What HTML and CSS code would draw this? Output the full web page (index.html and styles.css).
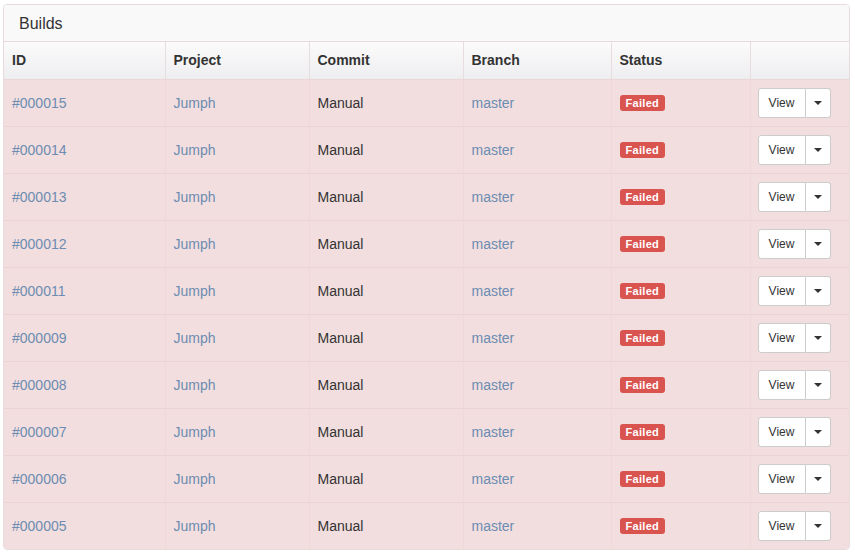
FILE: index.html
```html
<!DOCTYPE html>
<html>
<head>
<meta charset="utf-8">
<link rel="stylesheet" href="styles.css">
</head>
<body>
<div class="panel">
  <div class="panel-heading">Builds</div>
  <table class="builds">
    <colgroup>
      <col class="c-id"><col class="c-project"><col class="c-commit"><col class="c-branch"><col class="c-status"><col class="c-act">
    </colgroup>
    <thead>
      <tr><th>ID</th><th>Project</th><th>Commit</th><th>Branch</th><th>Status</th><th></th></tr>
    </thead>
    <tbody>
      <tr><td><a>#000015</a></td><td><a>Jumph</a></td><td>Manual</td><td><a>master</a></td><td><span class="label">Failed</span></td><td class="act"><span class="btn-group"><span class="btn">View</span><span class="btn caret-btn"><span class="caret"></span></span></span></td></tr>
      <tr><td><a>#000014</a></td><td><a>Jumph</a></td><td>Manual</td><td><a>master</a></td><td><span class="label">Failed</span></td><td class="act"><span class="btn-group"><span class="btn">View</span><span class="btn caret-btn"><span class="caret"></span></span></span></td></tr>
      <tr><td><a>#000013</a></td><td><a>Jumph</a></td><td>Manual</td><td><a>master</a></td><td><span class="label">Failed</span></td><td class="act"><span class="btn-group"><span class="btn">View</span><span class="btn caret-btn"><span class="caret"></span></span></span></td></tr>
      <tr><td><a>#000012</a></td><td><a>Jumph</a></td><td>Manual</td><td><a>master</a></td><td><span class="label">Failed</span></td><td class="act"><span class="btn-group"><span class="btn">View</span><span class="btn caret-btn"><span class="caret"></span></span></span></td></tr>
      <tr><td><a>#000011</a></td><td><a>Jumph</a></td><td>Manual</td><td><a>master</a></td><td><span class="label">Failed</span></td><td class="act"><span class="btn-group"><span class="btn">View</span><span class="btn caret-btn"><span class="caret"></span></span></span></td></tr>
      <tr><td><a>#000009</a></td><td><a>Jumph</a></td><td>Manual</td><td><a>master</a></td><td><span class="label">Failed</span></td><td class="act"><span class="btn-group"><span class="btn">View</span><span class="btn caret-btn"><span class="caret"></span></span></span></td></tr>
      <tr><td><a>#000008</a></td><td><a>Jumph</a></td><td>Manual</td><td><a>master</a></td><td><span class="label">Failed</span></td><td class="act"><span class="btn-group"><span class="btn">View</span><span class="btn caret-btn"><span class="caret"></span></span></span></td></tr>
      <tr><td><a>#000007</a></td><td><a>Jumph</a></td><td>Manual</td><td><a>master</a></td><td><span class="label">Failed</span></td><td class="act"><span class="btn-group"><span class="btn">View</span><span class="btn caret-btn"><span class="caret"></span></span></span></td></tr>
      <tr><td><a>#000006</a></td><td><a>Jumph</a></td><td>Manual</td><td><a>master</a></td><td><span class="label">Failed</span></td><td class="act"><span class="btn-group"><span class="btn">View</span><span class="btn caret-btn"><span class="caret"></span></span></span></td></tr>
      <tr><td><a>#000005</a></td><td><a>Jumph</a></td><td>Manual</td><td><a>master</a></td><td><span class="label">Failed</span></td><td class="act"><span class="btn-group"><span class="btn">View</span><span class="btn caret-btn"><span class="caret"></span></span></span></td></tr>
    </tbody>
  </table>
</div>
</body>
</html>
```
FILE: styles.css
```css
html, body {
  margin: 0;
  padding: 0;
  background: #ffffff;
}
body {
  font-family: "Liberation Sans", Arial, sans-serif;
  font-size: 14px;
  color: #333333;
}
.panel {
  margin: 4px 5px 6px 3px;
  border: 1px solid #e6dcdc;
  border-radius: 4px;
  background: #ffffff;
  overflow: hidden;
}
.panel-heading {
  height: 37px;
  box-sizing: border-box;
  padding: 1px 15px 0;
  line-height: 35px;
  font-size: 16px;
  color: #333333;
  background: #f9f9f9;
  border-bottom: 1px solid #ead9da;
}
.builds {
  width: 100%;
  border-collapse: collapse;
  table-layout: fixed;
}
.c-id { width: 161px; }
.c-project { width: 144px; }
.c-commit { width: 154px; }
.c-branch { width: 148px; }
.c-status { width: 139px; }
.builds th {
  text-align: left;
  font-weight: bold;
  height: 37px;
  box-sizing: border-box;
  padding: 0 8px;
  line-height: 20px;
  background: linear-gradient(#fbfbfb, #eeedf0);
  border-left: 1px solid #e6dede;
  border-bottom: 1px solid #ead6d6;
}
.builds th:first-child { border-left: none; }
.builds td {
  height: 47px;
  box-sizing: border-box;
  padding: 0 8px;
  background: #f2dede;
  border-top: 1px solid #ebd3d3;
  border-left: 1px solid #efd8d8;
  vertical-align: middle;
}
.builds td:first-child { border-left: none; }
.builds tbody tr:first-child td { border-top: none; }
.builds td.act { padding-left: 7px; }
.builds a {
  color: #6c8cb2;
  text-decoration: none;
}
.label {
  display: inline-block;
  background: #d9534f;
  color: #ffffff;
  font-size: 11px;
  font-weight: bold;
  line-height: 16px;
  padding: 0 6px;
  border-radius: 3px;
  vertical-align: middle;
  letter-spacing: 0.3px;
}
.btn-group {
  display: inline-flex;
  vertical-align: middle;
}
.btn {
  display: inline-flex;
  align-items: center;
  justify-content: center;
  height: 30px;
  box-sizing: border-box;
  width: 48px;
  font-size: 12px;
  color: #333333;
  background: #ffffff;
  border: 1px solid #cccccc;
  border-radius: 3px 0 0 3px;
}
.caret-btn {
  width: 25px;
  border-left: none;
  border-radius: 0 3px 3px 0;
}
.caret {
  width: 0;
  height: 0;
  border-left: 4px solid transparent;
  border-right: 4px solid transparent;
  border-top: 4px solid #333333;
}
```
